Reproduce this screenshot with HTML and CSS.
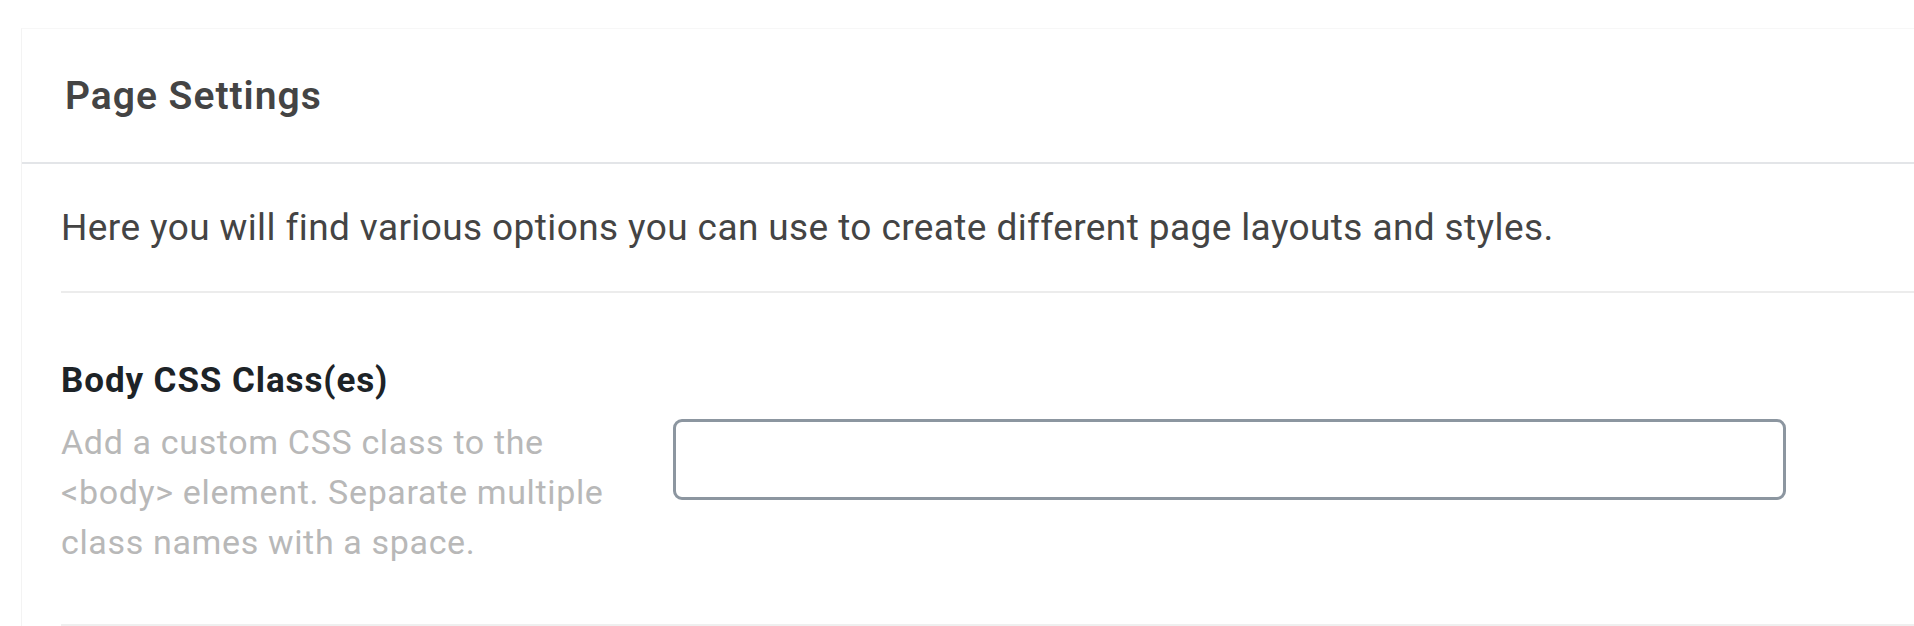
FILE: index.html
```html
<!DOCTYPE html>
<html lang="en">
<head>
<meta charset="utf-8">
<title>Page Settings</title>
<link rel="stylesheet" href="styles.css">
</head>
<body>
<div class="panel">
  <div class="panel-header">
    <h2 class="panel-title">Page Settings</h2>
  </div>
  <div class="panel-body">
    <p class="intro">Here you will find various options you can use to create different page layouts and styles.</p>
    <div class="field">
      <div class="field-info">
        <label class="field-label" for="body-class">Body CSS Class(es)</label>
        <p class="field-help">Add a custom CSS class to the &lt;body&gt; element. Separate multiple class names with a space.</p>
      </div>
      <div class="field-control">
        <input class="text-input" id="body-class" type="text">
      </div>
    </div>
  </div>
</div>
</body>
</html>
```
FILE: styles.css
```css
html, body {
  margin: 0;
  padding: 0;
  background: #ffffff;
  overflow: hidden;
}
body {
  font-family: Roboto, "Liberation Sans", sans-serif;
  height: 626px;
}
.panel {
  margin: 28px 0 0 21px;
  width: 2000px;
  border-left: 1px solid #f3f3f3;
  border-top: 1px solid #f7f7f7;
  background: #fff;
}
.panel-header {
  height: 135px;
  padding-left: 43px;
  display: flex;
  align-items: center;
  border-bottom: 2px solid #e3e5e8;
  box-sizing: border-box;
}
.panel-title {
  margin: 0;
  font-size: 39px;
  font-weight: 600;
  letter-spacing: 1px;
  color: #444444;
}
.panel-body {
  padding-left: 39px;
}
.intro {
  margin: 0;
  height: 129px;
  display: flex;
  align-items: center;
  font-size: 37px;
  letter-spacing: 0.4px;
  color: #444444;
  border-bottom: 2px solid #ececec;
  box-sizing: border-box;
}
.field {
  display: grid;
  grid-template-columns: 612px 1113px;
  padding: 68px 0 57px;
  border-bottom: 2px solid #efefef;
}
.field-label {
  display: block;
  font-size: 35px;
  font-weight: 700;
  letter-spacing: 0.9px;
  color: #1d2327;
  line-height: 40px;
}
.field-help {
  margin: 16px 0 0;
  width: 580px;
  font-size: 34px;
  letter-spacing: 0.65px;
  line-height: 50px;
  color: #b8b8b8;
}
.field-control {
  padding-top: 58px;
}
.text-input {
  display: block;
  width: 100%;
  height: 81px;
  box-sizing: border-box;
  border: 3px solid #8c96a0;
  border-radius: 9px;
  background: #fff;
  margin: 0;
}
```
